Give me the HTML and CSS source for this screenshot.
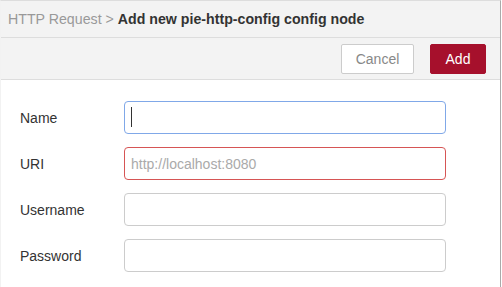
FILE: index.html
```html
<!DOCTYPE html>
<html lang="en">
<head>
    <meta charset="UTF-8">
    <title>Add new pie-http-config config node</title>
    <link rel="stylesheet" href="styles.css">
</head>
<body>
    <div class="tray">
        <div class="tray-header">
            <span class="crumb">HTTP Request &gt;</span>
            <span class="title">Add new pie-http-config config node</span>
        </div>
        <div class="tray-toolbar">
            <button class="btn">Cancel</button>
            <button class="btn btn-primary">Add</button>
        </div>
        <div class="tray-body">
            <div class="form-row">
                <label for="node-name">Name</label>
                <div class="input-wrap">
                    <input type="text" id="node-name" class="focused">
                    <span class="caret"></span>
                </div>
            </div>
            <div class="form-row">
                <label for="node-uri">URI</label>
                <input type="text" id="node-uri" class="invalid" placeholder="http://localhost:8080">
            </div>
            <div class="form-row">
                <label for="node-username">Username</label>
                <input type="text" id="node-username">
            </div>
            <div class="form-row">
                <label for="node-password">Password</label>
                <input type="password" id="node-password">
            </div>
        </div>
    </div>
</body>
</html>
```

FILE: styles.css
```css
body {
    margin: 0;
    font-family: "Liberation Sans", Arial, sans-serif;
    font-size: 14px;
    color: #333;
    background-color: white;
}
.tray {
    width: 501px;
    height: 287px;
    box-sizing: border-box;
    border-top: 1px solid #ddd;
    border-left: 1px solid #f2f2f2;
    border-right: 1px solid #aaa;
}
.tray-header {
    height: 36px;
    line-height: 36px;
    padding-left: 7px;
    font-size: 14.2px;
    background-color: #f3f3f3;
    border-bottom: 1px solid #ddd;
    white-space: nowrap;
}
.tray-header .crumb {
    color: #999;
}
.tray-header .title {
    font-weight: bold;
    color: #333;
}
.tray-toolbar {
    height: 42px;
    box-sizing: border-box;
    padding: 6px 14px 0 0;
    background-color: #f3f3f3;
    border-bottom: 1px solid #ddd;
    display: flex;
    justify-content: flex-end;
    gap: 16px;
}
.btn {
    width: 73px;
    height: 30px;
    padding: 0;
    font-family: inherit;
    font-size: 14px;
    color: #888;
    background-color: white;
    border: 1px solid #ccc;
    border-radius: 2px;
}
.btn-primary {
    width: 56px;
    color: white;
    background-color: #a6102c;
    border-color: #a6102c;
}
.tray-body {
    padding: 21px 0 0 19px;
}
.form-row {
    display: flex;
    align-items: center;
    margin-bottom: 13px;
}
label {
    width: 104px;
    flex-shrink: 0;
}
.input-wrap {
    position: relative;
}
input {
    width: 322px;
    height: 33px;
    box-sizing: border-box;
    padding: 0 6px;
    font-family: inherit;
    font-size: 14px;
    color: #333;
    border: 1px solid #ccc;
    border-radius: 4px;
    outline: none;
    caret-color: transparent;
}
input::placeholder {
    color: #aaa;
}
input.focused {
    border-color: #80a8e8;
}
input.invalid {
    border-color: #d65555;
}
.caret {
    position: absolute;
    left: 7px;
    top: 6px;
    width: 1px;
    height: 20px;
    background-color: #333;
}
```
